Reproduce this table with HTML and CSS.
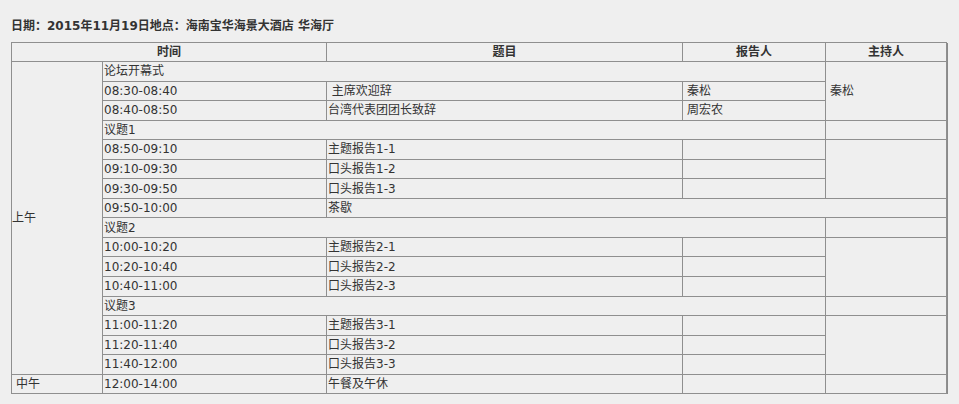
FILE: index.html
```html
<!DOCTYPE html>
<html lang="zh-CN">
<head>
<meta charset="utf-8">
<title>日程</title>
<link rel="stylesheet" href="styles.css">
</head>
<body>
<p class="info">日期：2015年11月19日地点：海南宝华海景大酒店 华海厅</p>
<table class="agenda">
  <colgroup>
    <col class="c-period">
    <col class="c-time">
    <col class="c-title">
    <col class="c-speaker">
    <col class="c-host">
  </colgroup>
  <tr class="head">
    <th colspan="2">时间</th>
    <th>题目</th>
    <th>报告人</th>
    <th>主持人</th>
  </tr>
  <tr>
    <td rowspan="16" class="period">上午</td>
    <td colspan="3">论坛开幕式</td>
    <td rowspan="3" class="host">秦松</td>
  </tr>
  <tr><td>08:30-08:40</td><td>&nbsp;主席欢迎辞</td><td class="spk">秦松</td></tr>
  <tr><td>08:40-08:50</td><td>台湾代表团团长致辞</td><td class="spk">周宏农</td></tr>
  <tr><td colspan="3">议题1</td><td></td></tr>
  <tr><td>08:50-09:10</td><td>主题报告1-1</td><td></td><td rowspan="3"></td></tr>
  <tr><td>09:10-09:30</td><td>口头报告1-2</td><td></td></tr>
  <tr><td>09:30-09:50</td><td>口头报告1-3</td><td></td></tr>
  <tr><td>09:50-10:00</td><td colspan="3">茶歇</td></tr>
  <tr><td colspan="3">议题2</td><td></td></tr>
  <tr><td>10:00-10:20</td><td>主题报告2-1</td><td></td><td rowspan="3"></td></tr>
  <tr><td>10:20-10:40</td><td>口头报告2-2</td><td></td></tr>
  <tr><td>10:40-11:00</td><td>口头报告2-3</td><td></td></tr>
  <tr><td colspan="3">议题3</td><td></td></tr>
  <tr><td>11:00-11:20</td><td>主题报告3-1</td><td></td><td rowspan="3"></td></tr>
  <tr><td>11:20-11:40</td><td>口头报告3-2</td><td></td></tr>
  <tr><td>11:40-12:00</td><td>口头报告3-3</td><td></td></tr>
  <tr>
    <td class="period noon">中午</td>
    <td>12:00-14:00</td>
    <td>午餐及午休</td>
    <td></td>
    <td></td>
  </tr>
</table>
</body>
</html>
```
FILE: styles.css
```css
html, body {
  margin: 0;
  padding: 0;
  background: #efefef;
}
body {
  padding: 17px 11px 0 11px;
  font-family: "DejaVu Sans", "Noto Sans CJK SC", sans-serif;
  font-size: 12px;
  color: #333;
}
.info {
  margin: 0 0 7px 0;
  line-height: 18px;
  font-weight: bold;
  font-size: 12px;
}
.agenda {
  border-collapse: collapse;
  table-layout: fixed;
  width: 936px;
  border: 1px solid #777;
  box-shadow: 1px 1px 0 #8a8a8a;
}
.c-period { width: 91px; }
.c-time { width: 224px; }
.c-title { width: 356px; }
.c-speaker { width: 143px; }
.c-host { width: 121px; }
.agenda th,
.agenda td {
  border: 1px solid #8f8f8f;
  height: 18.55px;
  padding: 0 1px;
  line-height: 18px;
  text-align: left;
  vertical-align: middle;
  white-space: nowrap;
  overflow: hidden;
}
.agenda th {
  text-align: center;
  font-weight: bold;
  height: 18px;
}
.agenda td.period {
  padding-left: 0;
}
.agenda td.noon {
  padding-left: 4px;
}
.agenda td.spk {
  padding-left: 4px;
}
.agenda td.host {
  padding-left: 4px;
}
```
